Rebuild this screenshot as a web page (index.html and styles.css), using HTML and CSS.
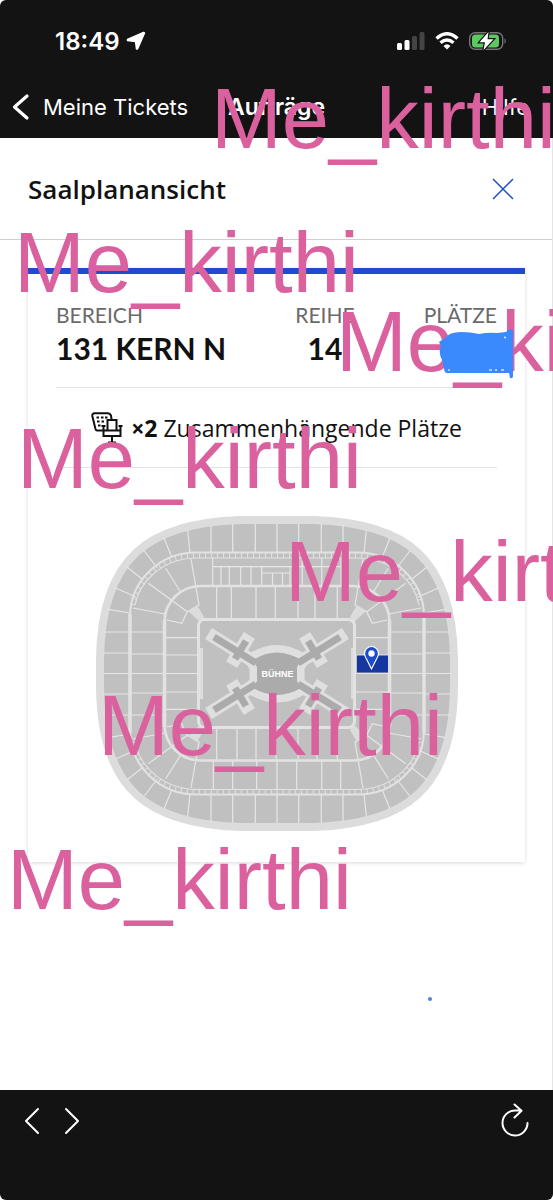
FILE: index.html
```
<!DOCTYPE html>
<html lang="de">
<head>
    <meta charset="UTF-8">
    <meta name="viewport" content="width=device-width, initial-scale=1.0">
    <title>Saalplanansicht</title>
    <link rel="stylesheet" href="styles.css">
</head>
<body>
    <header class="top">
        <div class="status">
            <div class="time">
                <span>18:49</span>
                <svg width="20" height="20" viewBox="0 0 20 20"><path d="M17.500 1.500 L1.500 8.500 L1.500 9.500 L9.500 10.500 L10.500 18 L11.500 18 L18.500 2Z" fill="#fff" stroke="#fff" stroke-width="1.500" stroke-linejoin="round"/></svg>
            </div>
            <div class="status-icons">
                <svg width="28" height="18" viewBox="0 0 28 18">
                    <rect x="0" y="11" width="5" height="7" rx="1.500" fill="#fff"/>
                    <rect x="7.500" y="8" width="5" height="10" rx="1.500" fill="#fff"/>
                    <rect x="15" y="4" width="5" height="14" rx="1.500" fill="#444"/>
                    <rect x="22.500" y="0" width="5" height="18" rx="1.500" fill="#444"/>
                </svg>
                <svg width="24" height="18" viewBox="0 0 24 18" fill="none" stroke="#fff" stroke-width="3.400">
                    <path d="M1.500 6.500 Q12 -3 22.500 6.500"/>
                    <path d="M5.500 10.800 Q12 5 18.500 10.800"/>
                    <path d="M8.500 14 Q12 10.500 15.500 14 L12 17.500Z" fill="#fff" stroke="none"/>
                </svg>
                <svg width="38" height="18" viewBox="0 0 38 18">
                    <rect x=".7" y=".7" width="33" height="16.600" rx="5.500" fill="none" stroke="#777" stroke-width="1.400"/>
                    <rect x="3" y="2.500" width="27" height="13" rx="3.500" fill="#5cc961"/>
                    <path d="M35.500 6 Q38 9 35.500 12Z" fill="#777"/>
                    <path d="M19.500 0 L10.500 10.200 H16 L14.500 18 L24.500 7.200 H18.500Z" fill="#fff" stroke="#131313" stroke-width="2.400" paint-order="stroke"/>
                </svg>
            </div>
        </div>
        <nav class="nav">
            <a href="#" class="back">
                <svg width="18" height="28" viewBox="0 0 18 28"><path d="M15 3 L2.500 14 L15 25" fill="none" stroke="#fff" stroke-width="3.200" stroke-linecap="round" stroke-linejoin="round"/></svg>
                Meine Tickets
            </a>
            <h1>Aufträge</h1>
            <a href="#" class="help">Hilfe</a>
        </nav>
    </header>

    <main>
        <div class="title-row">
            <h2>Saalplanansicht</h2>
            <button class="close" aria-label="Schließen">
                <svg width="22" height="22" viewBox="0 0 22 22"><path d="M1 1 L21 21 M21 1 L1 21" stroke="#1f4fc4" stroke-width="1.500"/></svg>
            </button>
        </div>

        <section class="card">
            <dl class="seat">
                <div>
                    <dt>BEREICH</dt>
                    <dd>131 KERN N</dd>
                </div>
                <div class="center">
                    <dt>REIHE</dt>
                    <dd>14</dd>
                </div>
                <div>
                    <dt>PLÄTZE</dt>
                    <dd></dd>
                </div>
            </dl>
            <p class="together">
                <svg width="32" height="32" viewBox="0 0 32 32" fill="none" stroke="#111" stroke-width="2">
                    <path d="M12 18.500 H6 Q5 18.500 4.500 17 L1.300 4 Q1 1.500 3.500 1.300 H17 Q19 1.300 20 3.500 L20.500 7" stroke-linecap="round"/>
                    <path d="M5.500 5.500 h2.500 M10 5.500 h2.500 M14 5.500 h2.500 M6 9.500 h2.500 M10.500 9.500 h2.500 M7 13.500 h2.500" stroke-width="1.800"/>
                    <path d="M16.500 18.500 V8 H25.500 V18.500" fill="#fff"/>
                    <path d="M12.500 14 V24 H29.500 V14 M10.500 14 H14.500 M27.500 14 H31.500 M12.500 18.500 H29.500 M21 24 V30.500 M17 30.500 H25"/>
                </svg>
                <span><b>×2</b> Zusammenhängende Plätze</span>
            </p>

            <svg class="plan" viewBox="95 515 364 318" role="img" aria-label="Saalplan">
                <defs>
                    <!-- blocks of one corner, mirrored four times -->
                    <g id="corner">
                        <path d="M211 525V552 M232.700 524V552 M255.300 524V552 M187.700 531L190 553 M164 538L171.700 557 M144.300 551L157.300 568 M126.700 566.700L143.300 580 M115 587.700L136 597 M108 609.300L130 613 M103 632H130 M103 653H130"/>
                        <path d="M133 608L165 614 M148.300 583.300L187.300 611.700 M165.700 568.300L180 591 M191 559L199 605L187.300 611.700L181.700 623.300L167 620 M130 632H164 M130 654H164 M164 637.700H198 M164 655H198"/>
                        <path d="M216.700 586V619 M256 586V619"/>
                        <path d="M188 611L197 605L204 617L200 622Z" fill="#dcdcdc" stroke="none"/>
                        <path d="M201 648V674" stroke="#dcdcdc" stroke-width="4"/>
                    </g>
                    <g id="half">
                        <use href="#corner"/>
                        <use href="#corner" transform="translate(554 0) scale(-1 1)"/>
                    </g>
                    <g id="arm">
                        <path d="M214 637L256 663"/>
                        <path d="M246 641L235 659"/>
                    </g>
                    <g id="arms">
                        <use href="#arm"/>
                        <use href="#arm" transform="translate(554 0) scale(-1 1)"/>
                        <use href="#arm" transform="translate(0 1347) scale(1 -1)"/>
                        <use href="#arm" transform="translate(554 1347) scale(-1 -1)"/>
                    </g>
                    <path id="stage" d="M253 660Q277 645 301 660L297 667V681L301 688Q277 702 253 688L257 681V667Z"/>
                </defs>
                <path d="M240 520C150 523 101 556 100 660V687C101 791 150 824 240 827H314C404 824 453 791 454 687V660C453 556 404 523 314 520Z" fill="#c0c0c0" stroke="#dcdcdc" stroke-width="8"/>
                <g fill="none" stroke="#e6e6e6" stroke-width="1.200">
                    <use href="#half"/>
                    <use href="#half" transform="translate(0 1347) scale(1 -1)"/>
                    <path d="M103 673.500H198 M356 673.500H451 M277 524V552 M277 795V823"/>
                    <path d="M212.700 558V586 M221 567V586 M229.300 567V586 M240.700 567V586 M251 567V586 M261.700 586V573H290V567 M272.500 573V586 M282.500 573V586 M290 573V586 M302.300 558V586 M321.700 558V586 M341 558V586 M213 566.700H341 M261.700 573V567"/>
                    <path d="M213.300 760V790 M232.700 760V790 M256.700 760V790 M277 760V790 M296.700 760V790 M321.700 760V790 M340.700 760V790"/>
                    <path d="M231.300 586V619 M275.300 586V619 M315 586V619 M237 727V760 M276 727V760 M317 727V760"/>
                </g>
                <g fill="none" stroke="#e2e2e2">
                    <rect x="130" y="552.500" width="294" height="242" rx="66" ry="64" stroke-width="2"/>
                    <path d="M135 605C140 580 164 558 197 558H357C390 558 414 580 419 605 M135 742C140 767 164 789.500 197 789.500H357C390 789.500 414 767 419 742" stroke-width="1.200"/>
                    <path d="M133 605C138 577 163 555.500 197 555.500H357C391 555.500 416 577 421 605 M133 742C138 770 163 792 197 792H357C391 792 416 770 421 742" stroke-width="5" stroke-dasharray="1 5"/>
                    <path d="M130 614V733 M424 614V733" stroke-width="3.500"/>
                    <rect x="164.500" y="586" width="225" height="174.500" rx="36" stroke-width="2.600"/>
                    <path d="M164.500 620V727 M389.500 620V727" stroke-width="3.600"/>
                    <rect x="198.500" y="619.500" width="156" height="108" rx="6" stroke-width="3"/>
                </g>
                <g fill="none" stroke="#dfdfdf">
                    <use href="#arms" stroke-width="13" stroke-linecap="square"/>
                    <use href="#stage" stroke-width="15"/>
                </g>
                <g fill="#ababab" stroke="#ababab">
                    <use href="#arms" stroke-width="7"/>
                    <use href="#stage" stroke="none"/>
                </g>
                <text x="277.500" y="676.500" class="stage-label">BÜHNE</text>
                <rect x="357" y="655.500" width="31" height="17" fill="#1637a0"/>
                <path d="M371.500 669L366.500 659Q364.500 656 364.500 653.500A7 7 0 0 1 378.500 653.500Q378.500 656 376.500 659Z" fill="#1c49d0" stroke="#fff" stroke-width="1.200"/>
                <circle cx="371.500" cy="653.500" r="3.200" fill="#fff"/>
            </svg>
        </section>
    </main>

    <footer class="toolbar">
        <button aria-label="Zurück"><svg width="16" height="28" viewBox="0 0 16 28"><path d="M14 2 L2 14 L14 26"/></svg></button>
        <button aria-label="Vorwärts"><svg width="16" height="28" viewBox="0 0 16 28"><path d="M2 2 L14 14 L2 26"/></svg></button>
        <button class="reload" aria-label="Neu laden"><svg width="28" height="34" viewBox="0 0 28 34"><path d="M26.500 20 A12.500 12.500 0 1 1 14 7.500 H20 M13.500 1.500 L20.500 7.800 L13.500 14.500"/></svg></button>
    </footer>

    <div class="overlay">
        <span class="mark m1">Me_kirthi</span>
        <span class="mark m2">Me_kirthi</span>
        <span class="mark m3">Me_kirthi</span>
        <span class="mark m4">Me_kirthi</span>
        <span class="mark m5">Me_kirthi</span>
        <span class="mark m6">Me_kirthi</span>
        <span class="mark m7">Me_kirthi</span>
        <svg class="scribble" width="76" height="52" viewBox="0 0 76 52">
            <path d="M6 10 Q10 4 22 4 Q32 4 40 6 Q50 4 58 5 L67 4 Q70 0 74 2 V48 Q74 51 71 50 L70 45 H10 Q5 46 5 40 L3 32 Q-1 24 2 18 L0 14Z" fill="#3a89fd"/>
            <path d="M9 42 h2 M50 42 h3 M56 42 h2 M62 42 h3 M65 9 l2 1" stroke="#cfe2ff" stroke-width="1.500"/>
        </svg>
        <i class="dot"></i>
    </div>
</body>
</html>
```
FILE: styles.css
```
* {
    box-sizing: border-box;
}

body {
    margin: 0;
    min-height: 100vh;
    display: flex;
    flex-direction: column;
    position: relative;
    background-color: #fff;
    color: #111;
    font-family: 'Lato', sans-serif;
}

h1, h2, p, dl, dd {
    margin: 0;
}

button {
    padding: 0;
    border: none;
    background: none;
    cursor: pointer;
}

svg {
    display: block;
}

.top {
    background-color: #131313;
    color: #fff;
    font-family: 'Inter', sans-serif;
    border-radius: 6px 6px 0 0;
}

.status {
    display: flex;
    justify-content: space-between;
    align-items: center;
    height: 82px;
    padding: 0 46px 0 55px;
}

.time {
    display: flex;
    align-items: center;
    gap: 6px;
    font-size: 24px;
    font-weight: 600;
}

.status-icons {
    display: flex;
    gap: 10px;
}

.nav {
    display: grid;
    grid-template-columns: 1fr auto 1fr;
    align-items: center;
    height: 56px;
    padding: 0 12px 6px;
    font-size: 22px;
}

.nav a {
    color: #fff;
    text-decoration: none;
}

.nav h1 {
    font-size: 23px;
    font-weight: 600;
}

.back {
    display: flex;
    align-items: center;
    gap: 13px;
}

.help {
    padding-right: 12px;
    text-align: right;
}

main {
    flex: 1;
    border-right: 1px solid #e4e4e4;
}

.title-row {
    display: flex;
    justify-content: space-between;
    align-items: center;
    height: 102px;
    padding: 0 38px 0 28px;
    border-bottom: 1px solid #cfcfcf;
}

.title-row h2 {
    font-family: 'Open Sans', sans-serif;
    font-size: 26px;
    font-weight: 600;
}

.card {
    margin: 28px 27px 0 28px;
    padding: 0 28px 29px;
    border-top: 6px solid #204ad0;
    box-shadow: 0 1px 4px rgba(0, 0, 0, 0.15);
}

.seat {
    display: flex;
    justify-content: space-between;
    height: 114px;
    padding-top: 28px;
    border-bottom: 1px solid #e2e2e2;
}

.seat dt {
    font-size: 21px;
    line-height: 26px;
    color: #6a6a6a;
}

.seat dd {
    font-size: 30px;
    line-height: 40px;
    font-weight: bold;
}

.center {
    text-align: center;
}

.together {
    display: flex;
    justify-content: center;
    align-items: center;
    gap: 8px;
    height: 80px;
    border-bottom: 1px solid #e2e2e2;
    font-family: 'Open Sans', sans-serif;
    font-size: 23px;
}

.plan {
    width: calc(100% - 77px);
    margin: 47px auto 0;
}

.stage-label {
    font-family: 'Liberation Sans', sans-serif;
    font-size: 9px;
    font-weight: bold;
    fill: #fff;
    text-anchor: middle;
}

.toolbar {
    display: flex;
    align-items: flex-start;
    gap: 24px;
    height: 110px;
    padding: 17px 24px 0;
    background-color: #131313;
    border-radius: 0 0 6px 6px;
}

.toolbar path {
    fill: none;
    stroke: #fff;
    stroke-width: 2;
    stroke-linecap: round;
    stroke-linejoin: round;
}

.reload {
    margin: -4px 0 0 auto;
}

/* writing and brush marks on top of the page */
.overlay {
    position: absolute;
    inset: 0;
    overflow: hidden;
    pointer-events: none;
}

.mark {
    position: absolute;
    font-family: 'Liberation Sans', sans-serif;
    font-size: 85px;
    line-height: 85px;
    color: #da609e;
}

.m1 { left: 211px; top: 76px; }
.m2 { left: 14px; top: 220px; }
.m3 { left: 336px; top: 299px; }
.m4 { left: 17px; top: 416px; }
.m5 { left: 285px; top: 529px; }
.m6 { left: 98px; top: 683px; }
.m7 { left: 7px; top: 837px; }

.scribble {
    position: absolute;
    left: 439px;
    top: 328px;
}

.dot {
    position: absolute;
    left: 428px;
    top: 997px;
    width: 4px;
    height: 4px;
    border-radius: 50%;
    background-color: #4a84e8;
}
```
